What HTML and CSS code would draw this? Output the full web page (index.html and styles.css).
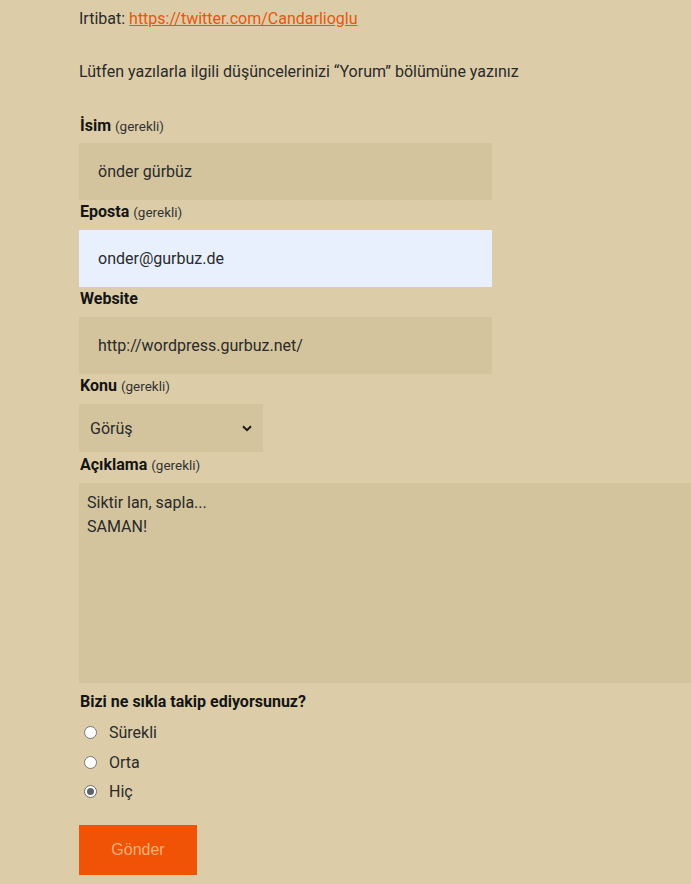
FILE: index.html
```html
<!DOCTYPE html>
<html lang="tr">
<head>
<meta charset="utf-8">
<link rel="stylesheet" href="styles.css">
</head>
<body>
<div class="page">
  <p class="line first">Irtibat: <a href="#">https://twitter.com/Candarlioglu</a></p>
  <p class="line second">Lütfen yazılarla ilgili düşüncelerinizi “Yorum” bölümüne yazınız</p>
  <form class="form">
    <label class="lbl lbl-first">İsim <span class="req">(gerekli)</span></label>
    <div class="field">önder gürbüz</div>
    <label class="lbl">Eposta <span class="req">(gerekli)</span></label>
    <div class="field autofill">onder@gurbuz.de</div>
    <label class="lbl">Website</label>
    <div class="field">http://wordpress.gurbuz.net/</div>
    <label class="lbl">Konu <span class="req">(gerekli)</span></label>
    <div class="select"><span>Görüş</span>
      <svg class="chev" width="10" height="7" viewBox="0 0 10 7"><path d="M1 1.2 L5 5.2 L9 1.2" fill="none" stroke="#1a1a1a" stroke-width="2"/></svg>
    </div>
    <label class="lbl lbl-area">Açıklama <span class="req">(gerekli)</span></label>
    <div class="area"><div>Siktir lan, sapla...</div><div>SAMAN!</div></div>
    <div class="q">Bizi ne sıkla takip ediyorsunuz?</div>
    <div class="radios">
      <div class="radio"><span class="dot"></span><span>Sürekli</span></div>
      <div class="radio"><span class="dot"></span><span>Orta</span></div>
      <div class="radio"><span class="dot checked"></span><span>Hiç</span></div>
    </div>
    <div class="btn">Gönder</div>
  </form>
</div>
</body>
</html>
```
FILE: styles.css
```css
html, body {
  margin: 0;
  padding: 0;
  background: #dccda8;
}
body {
  font-family: Roboto, "Noto Sans", sans-serif;
  color: #1f1f1f;
  overflow: hidden;
  height: 884px;
}
.page {
  padding-left: 79px;
}
.line {
  margin: 0;
  font-size: 16px;
  line-height: 24px;
  color: #2a2a2a;
}
.first {
  padding-top: 7px;
}
.second {
  margin-top: 29px;
}
.line a {
  color: #e8560e;
  text-decoration: underline;
}
.form {
  display: flex;
  flex-direction: column;
  align-items: flex-start;
}
.lbl {
  font-size: 16px;
  font-weight: 700;
  line-height: 20px;
  margin-top: 2px;
  margin-bottom: 8px;
  padding-left: 1px;
  color: #141414;
}
.lbl-first {
  margin-top: 32px;
  margin-bottom: 7px;
}
.lbl-area {
  margin-top: 3px;
}
.req {
  font-size: 13.5px;
  font-weight: 400;
  color: #333;
}
.field {
  box-sizing: border-box;
  width: 413px;
  height: 57px;
  background: #d3c49d;
  padding-left: 19px;
  display: flex;
  align-items: center;
  font-size: 16px;
  color: #2a2a2a;
}
.field.autofill {
  background: #e8f0fe;
}
.select {
  box-sizing: border-box;
  width: 184px;
  height: 48px;
  background: #d3c49d;
  padding: 0 11px;
  display: flex;
  align-items: center;
  justify-content: space-between;
  font-size: 16px;
  color: #2a2a2a;
}
.area {
  box-sizing: border-box;
  width: 612px;
  height: 200px;
  background: #d3c49d;
  padding: 8px 8px;
  font-size: 16px;
  line-height: 24px;
  color: #2a2a2a;
}
.q {
  font-size: 16px;
  font-weight: 700;
  line-height: 20px;
  margin-top: 9px;
  padding-left: 1px;
  color: #141414;
}
.radios {
  display: flex;
  flex-direction: column;
  margin-top: 6px;
}
.radio {
  display: flex;
  align-items: center;
  height: 29.5px;
  font-size: 16px;
  color: #2a2a2a;
}
.dot {
  box-sizing: border-box;
  width: 13px;
  height: 13px;
  border-radius: 50%;
  border: 1px solid #767676;
  background: #fff;
  margin-left: 5px;
  margin-right: 12px;
  position: relative;
}
.dot.checked {
  border-color: #6a6a6a;
}
.dot.checked::after {
  content: "";
  position: absolute;
  left: 2px;
  top: 2px;
  width: 7px;
  height: 7px;
  border-radius: 50%;
  background: #5f6368;
}
.btn {
  margin-top: 18px;
  width: 118px;
  height: 50px;
  background: #f05305;
  color: #f6b07a;
  font-family: "Liberation Sans", Arial, sans-serif;
  font-size: 16px;
  display: flex;
  align-items: center;
  justify-content: center;
}
```
